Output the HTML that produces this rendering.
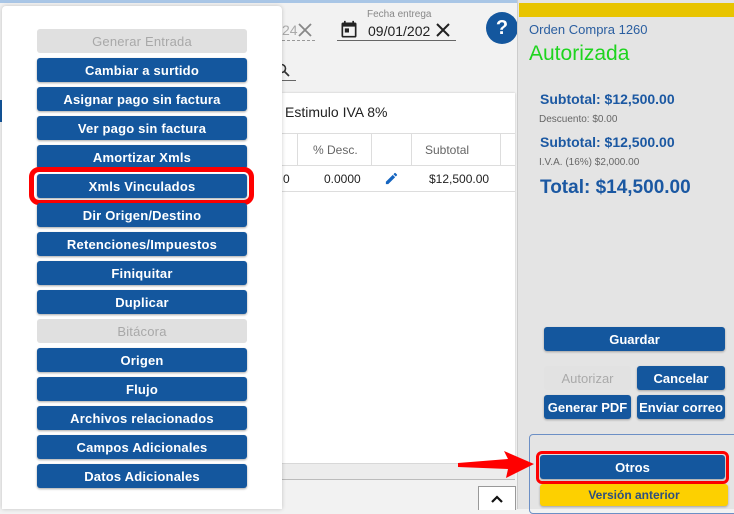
<!DOCTYPE html>
<html><head><meta charset="utf-8"><style>
*{box-sizing:border-box;margin:0;padding:0}
body{width:734px;height:509px;overflow:hidden;position:relative;background:#f2f2f2;font-family:"Liberation Sans",sans-serif}
.a{position:absolute}
.btn{position:absolute;left:37px;width:210px;height:24px;background:#14579e;color:#fff;border-radius:3px;font-size:13px;font-weight:bold;text-align:center;line-height:25px;box-shadow:0 1px 2px rgba(0,0,0,.35);letter-spacing:.2px}
.dis{background:#e0e0e0;color:#a8a8a8;box-shadow:none;font-weight:normal}
.rb{position:absolute;height:24px;background:#14579e;color:#fff;border-radius:3px;font-size:13px;font-weight:bold;text-align:center;line-height:25px;box-shadow:0 1px 2px rgba(0,0,0,.3)}
</style></head><body>
<div class="a" style="left:0;top:0;width:734px;height:3px;background:#a9c6e6"></div>
<div class="a" style="left:282px;top:93px;width:233px;height:370px;background:#fff;box-shadow:0 0 2px rgba(0,0,0,.2)"></div>
<div class="a" style="left:282px;top:463px;width:233px;height:17px;background:#ececec;border-top:1px solid #d8d8d8;border-bottom:1px solid #bbb"></div>
<div class="a" style="left:285px;top:104px;font-size:14px;color:#222">Estimulo IVA 8%</div>
<div class="a" style="left:282px;top:133px;width:233px;height:1px;background:#ddd"></div>
<div class="a" style="left:282px;top:165px;width:233px;height:1px;background:#ddd"></div>
<div class="a" style="left:282px;top:191px;width:233px;height:1px;background:#ddd"></div>
<div class="a" style="left:297px;top:133px;width:1px;height:33px;background:#ddd"></div>
<div class="a" style="left:371px;top:133px;width:1px;height:33px;background:#ddd"></div>
<div class="a" style="left:411px;top:133px;width:1px;height:33px;background:#ddd"></div>
<div class="a" style="left:500px;top:133px;width:1px;height:33px;background:#ddd"></div>
<div class="a" style="left:313px;top:143px;font-size:12px;color:#666">% Desc.</div>
<div class="a" style="left:425px;top:143px;font-size:12px;color:#666">Subtotal</div>
<div class="a" style="left:283px;top:172px;font-size:12px;color:#222">0</div>
<div class="a" style="left:324px;top:172px;font-size:12px;color:#222">0.0000</div>
<svg class="a" style="left:384px;top:171px" width="15" height="15" viewBox="0 0 24 24"><path fill="#1565c0" d="M3 17.25V21h3.75L17.81 9.94l-3.75-3.75L3 17.25zM20.71 7.04a1 1 0 000-1.41l-2.34-2.34a1 1 0 00-1.41 0l-1.83 1.83 3.75 3.75 1.83-1.83z"/></svg>
<div class="a" style="left:429px;top:172px;font-size:12px;color:#222">$12,500.00</div>
<div class="a" style="left:282px;top:22px;font-size:14px;color:#aaa">24</div>
<div class="a" style="left:282px;top:40px;width:33px;border-top:1px dashed #999"></div>
<svg class="a" style="left:297px;top:22px" width="16" height="16" viewBox="0 0 16 16"><path d="M2 2L14 14M14 2L2 14" stroke="#888" stroke-width="1.8"/></svg>
<div class="a" style="left:367px;top:9px;font-size:10px;color:#888">Fecha entrega</div>
<svg class="a" style="left:339px;top:20px" width="20" height="20" viewBox="0 0 24 24"><path fill="#222" d="M19 3h-1V1h-2v2H8V1H6v2H5a2 2 0 00-2 2v14a2 2 0 002 2h14a2 2 0 002-2V5a2 2 0 00-2-2zm0 16H5V8h14v11zM7 10h5v5H7z"/></svg>
<div class="a" style="left:368px;top:23px;font-size:14px;color:#222;width:62px;overflow:hidden;white-space:nowrap">09/01/2024</div>
<div class="a" style="left:337px;top:40px;width:119px;height:1px;background:#666"></div>
<svg class="a" style="left:435px;top:22px" width="16" height="16" viewBox="0 0 16 16"><path d="M2 2L14 14M14 2L2 14" stroke="#222" stroke-width="2"/></svg>
<div class="a" style="left:486px;top:12px;width:32px;height:32px;border-radius:50%;background:#14579e;color:#fff;font-weight:bold;font-size:20px;text-align:center;line-height:32px">?</div>
<div class="a" style="left:282px;top:80px;width:14px;height:1px;background:#666"></div>
<svg class="a" style="left:276px;top:63px" width="14" height="14" viewBox="0 0 14 14"><circle cx="5.5" cy="5.5" r="4" fill="none" stroke="#333" stroke-width="1.6"/><path d="M8.5 8.5L13 13" stroke="#333" stroke-width="1.8"/></svg>
<div class="a" style="left:478px;top:486px;width:38px;height:24px;background:#fff;border:1px solid #999;border-bottom:none"></div>
<svg class="a" style="left:490px;top:494px" width="14" height="10" viewBox="0 0 14 10"><path d="M2 8L7 3L12 8" fill="none" stroke="#111" stroke-width="2.2"/></svg>
<div class="a" style="left:0;top:100px;width:3px;height:22px;background:#14579e"></div>
<div class="a" style="left:2px;top:6px;width:280px;height:503px;background:#fff;border-radius:4px 4px 0 0;box-shadow:0 0 4px rgba(0,0,0,.2)"></div>
<div class="btn dis" style="top:29px">Generar Entrada</div>
<div class="btn" style="top:58px">Cambiar a surtido</div>
<div class="btn" style="top:87px">Asignar pago sin factura</div>
<div class="btn" style="top:116px">Ver pago sin factura</div>
<div class="btn" style="top:145px">Amortizar Xmls</div>
<div class="a" style="left:29px;top:167px;width:225px;height:38px;border:5px solid #f00;border-radius:10px"></div>
<div class="btn" style="top:174px">Xmls Vinculados</div>
<div class="btn" style="top:203px">Dir Origen/Destino</div>
<div class="btn" style="top:232px">Retenciones/Impuestos</div>
<div class="btn" style="top:261px">Finiquitar</div>
<div class="btn" style="top:290px">Duplicar</div>
<div class="btn dis" style="top:319px">Bitácora</div>
<div class="btn" style="top:348px">Origen</div>
<div class="btn" style="top:377px">Flujo</div>
<div class="btn" style="top:406px">Archivos relacionados</div>
<div class="btn" style="top:435px">Campos Adicionales</div>
<div class="btn" style="top:464px">Datos Adicionales</div>
<div class="a" style="left:517px;top:0;width:217px;height:509px;background:#e4e4e4;border-left:1px solid #ccc"></div>
<div class="a" style="left:519px;top:3px;width:215px;height:14px;background:#e8c400"></div>
<div class="a" style="left:529px;top:22px;font-size:13px;color:#2a5ea0">Orden Compra 1260</div>
<div class="a" style="left:529px;top:42px;font-size:21px;color:#1ed41e">Autorizada</div>
<div class="a" style="left:540px;top:91px;font-size:14px;font-weight:bold;color:#1b58a2">Subtotal: $12,500.00</div>
<div class="a" style="left:539px;top:114px;font-size:10px;color:#666">Descuento: $0.00</div>
<div class="a" style="left:540px;top:134px;font-size:14px;font-weight:bold;color:#1b58a2">Subtotal: $12,500.00</div>
<div class="a" style="left:539px;top:157px;font-size:10px;color:#666">I.V.A. (16%) $2,000.00</div>
<div class="a" style="left:540px;top:177px;font-size:19px;font-weight:bold;color:#1b58a2">Total: $14,500.00</div>
<div class="rb" style="left:544px;top:327px;width:181px">Guardar</div>
<div class="rb" style="left:544px;top:366px;width:87px;background:#e2e2e2;color:#aaa;box-shadow:none;font-weight:normal">Autorizar</div>
<div class="rb" style="left:637px;top:366px;width:88px">Cancelar</div>
<div class="rb" style="left:544px;top:395px;width:87px">Generar PDF</div>
<div class="rb" style="left:637px;top:395px;width:88px">Enviar correo</div>
<div class="a" style="left:529px;top:434px;width:210px;height:80px;border:1px solid #6c8fc5;border-radius:4px"></div>
<div class="a" style="left:536px;top:451px;width:193px;height:33px;border:3px solid #f00;border-radius:6px"></div>
<div class="rb" style="left:540px;top:455px;width:185px">Otros</div>
<div class="rb" style="left:540px;top:484px;width:188px;height:22px;line-height:22px;background:#fdd000;color:#2e4f7f;font-size:12px">Versión anterior</div>
<svg class="a" style="left:456px;top:450px" width="80" height="30"><polygon points="2,13 52,9 48,1 78,14 50,28 52,19 2,17" fill="#f00"/></svg>
</body></html>
